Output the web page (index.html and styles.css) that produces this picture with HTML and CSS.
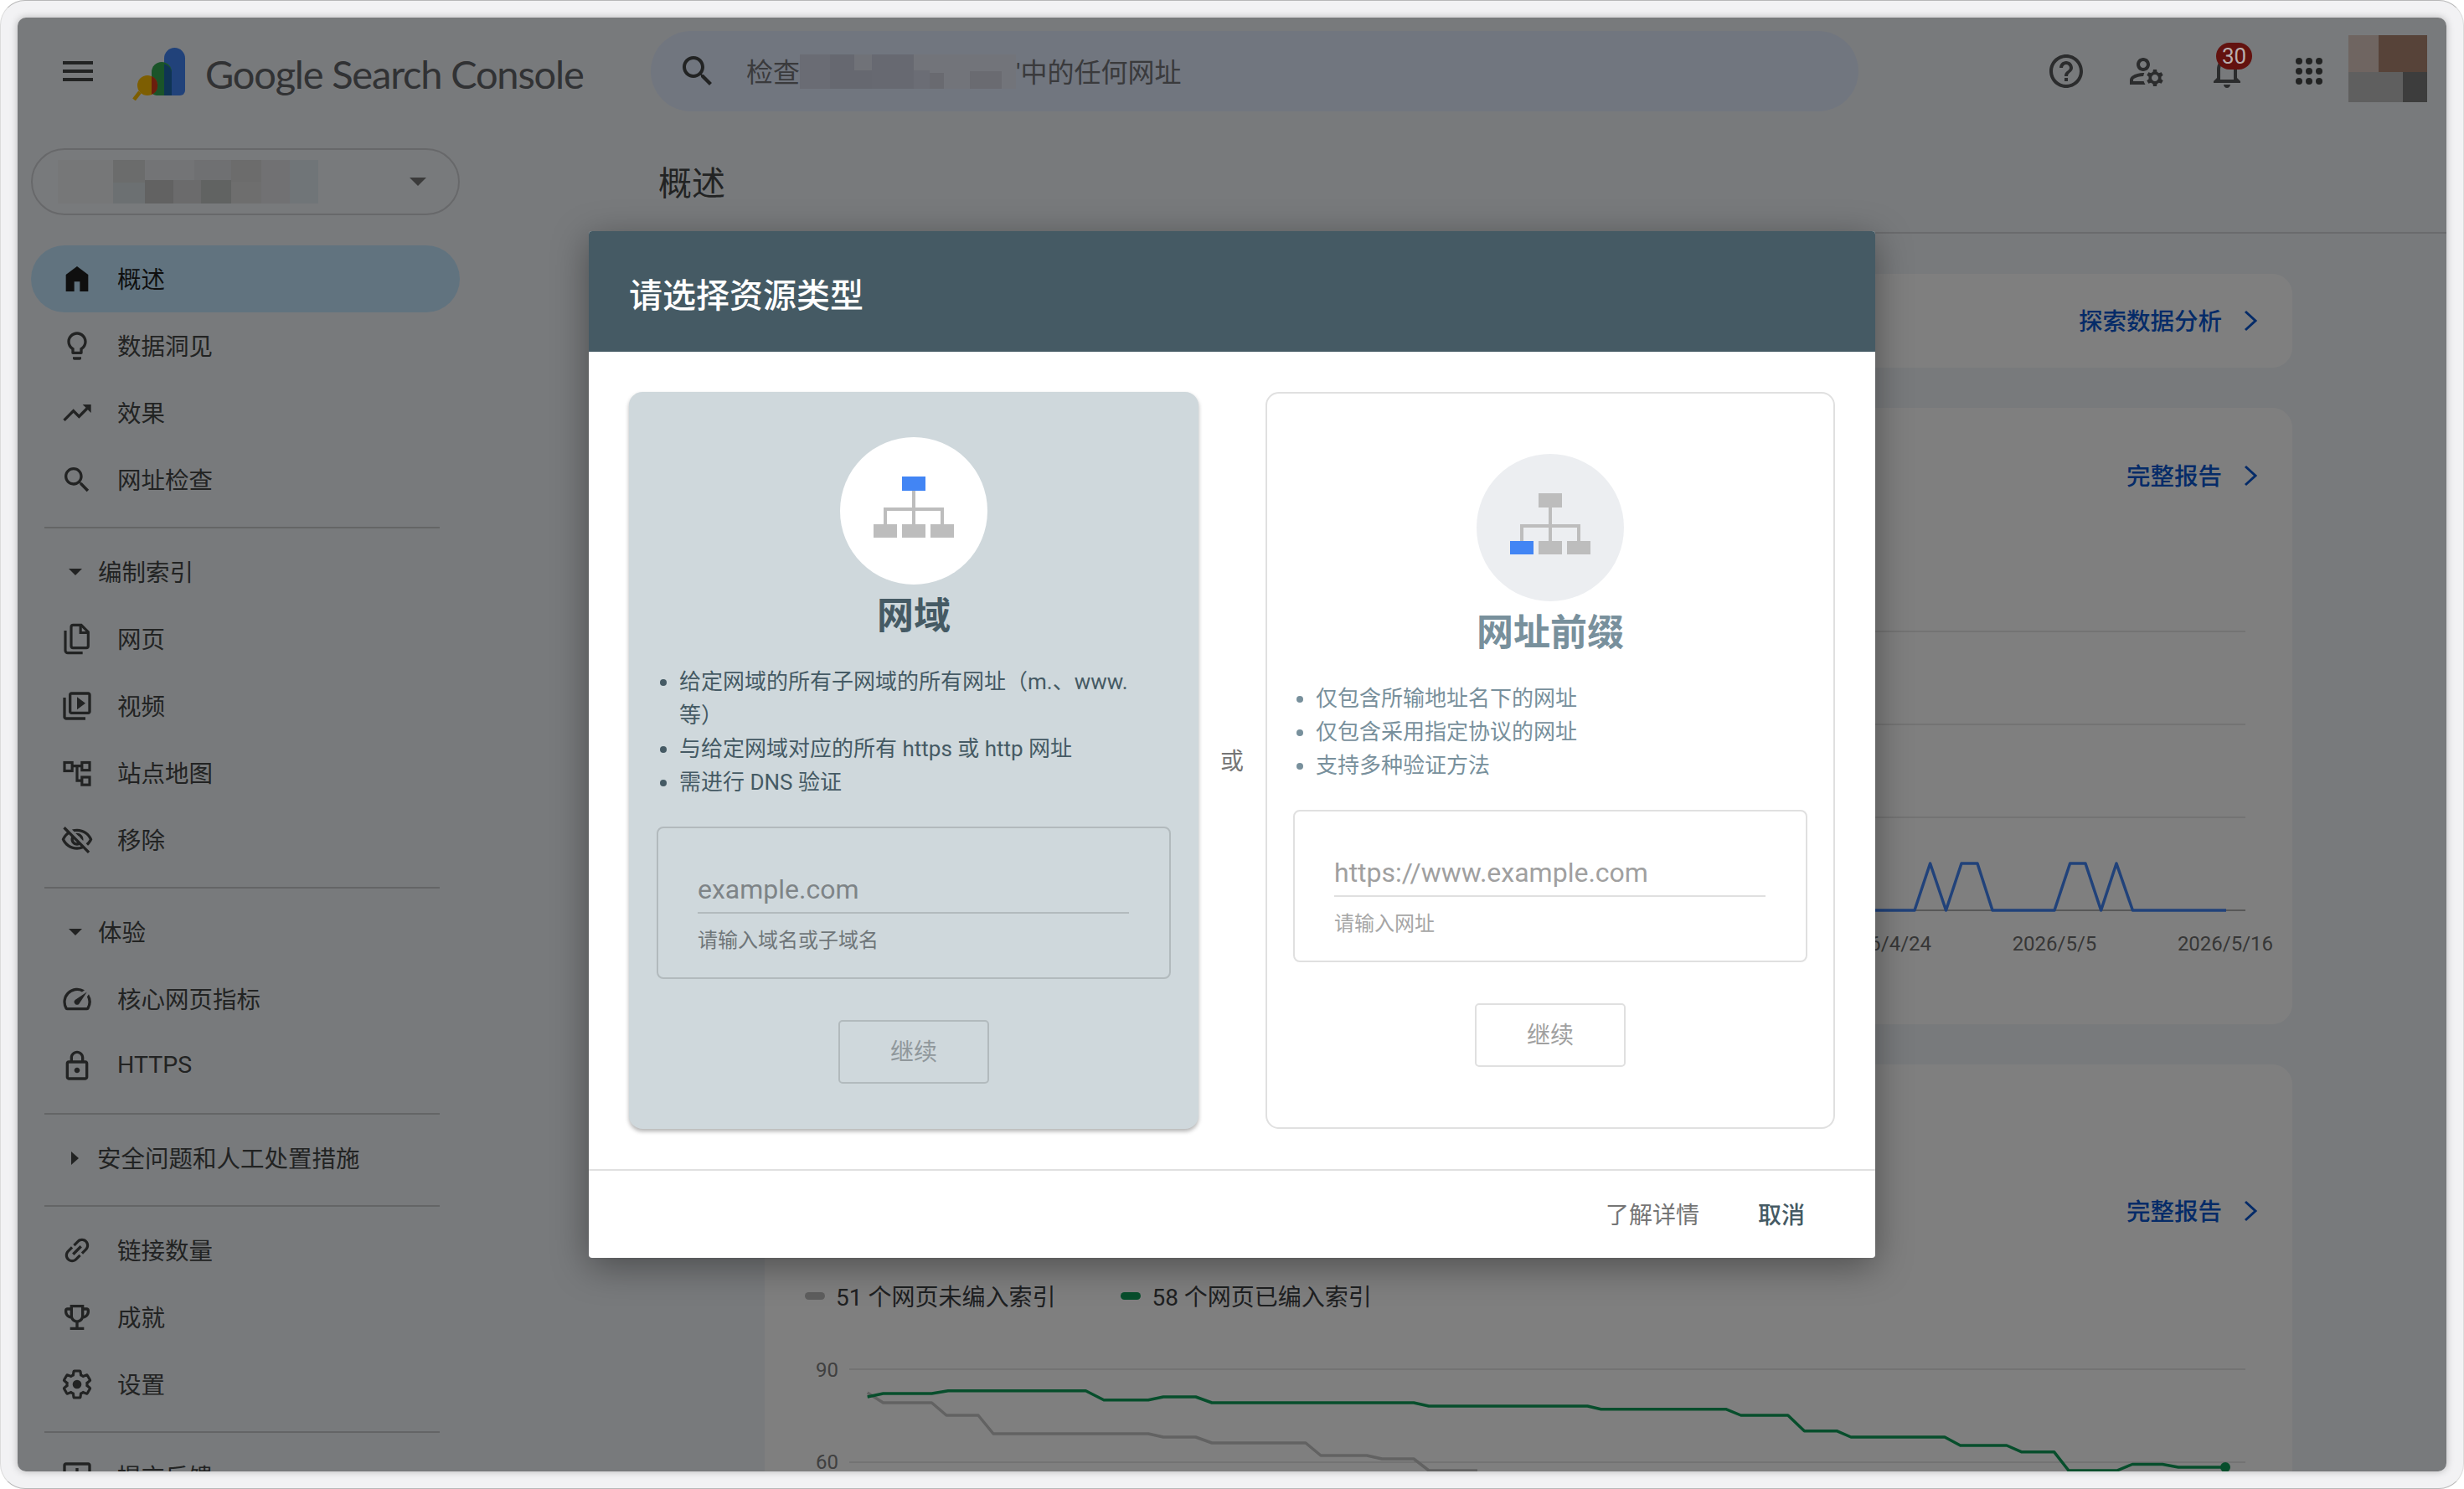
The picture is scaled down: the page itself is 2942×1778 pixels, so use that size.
FILE: index.html
```html
<!DOCTYPE html>
<html lang="zh-CN">

<head>
    <meta charset="utf-8">
    <title>Google Search Console</title>
    <link rel="stylesheet" href="styles.css">
</head>

<body>
    <div class="window">
        <div class="app">
            <header class="top_bar">
                <svg class="menu_icon" viewBox="0 0 24 24"><path d="M3 18h18v-2H3v2zm0-5h18v-2H3v2zm0-7v2h18V6H3z"/></svg>
                <svg class="logo" viewBox="0 0 64 64">
                    <path fill="#4285f4" d="M38 13.5a12.5 12.5 0 0 1 25 0V52a6 6 0 0 1-6 6H38z"/>
                    <path fill="#34a853" d="M23 30a12 12 0 0 1 24 0V58H29a6 6 0 0 1-6-6z"/>
                    <path fill="#1f68a8" d="M38 20.5a12 12 0 0 1 9 9.5V58H38z"/>
                    <line x1="9" y1="54" x2="2" y2="63" stroke="#fbbc04" stroke-width="4.5"/>
                    <circle cx="18" cy="46" r="12" fill="#fbbc04"/>
                    <path fill="#d63c1c" d="M23 35a12 12 0 0 1 0 22z"/>
                </svg>
                <div class="product_name">Google Search Console</div>
                <div class="search_bar">
                    <svg class="search_icon" viewBox="0 0 24 24"><path d="M15.5 14h-.79l-.28-.27C15.41 12.59 16 11.11 16 9.5 16 5.91 13.09 3 9.5 3S3 5.91 3 9.5 5.91 16 9.5 16c1.61 0 3.09-.59 4.23-1.57l.27.28v.79l5 4.99L20.49 19l-4.99-5zm-6 0C7.01 14 5 11.99 5 9.5S7.01 5 9.5 5 14 7.01 14 9.5 11.99 14 9.5 14z"/></svg>
                    <span class="search_text">检查</span>
                    <svg class="search_mosaic" viewBox="0 0 258 41">
                        <rect width="36" height="41" fill="#d4d8e8"/>
                        <rect x="36" width="50" height="41" fill="#ccd0e0"/>
                        <rect x="65" width="21" height="19" fill="#e0e4f0"/>
                        <rect x="86" width="50" height="41" fill="#ced2e2"/>
                        <rect x="136" width="122" height="41" fill="#e4e8f4"/>
                        <rect x="136" y="19" width="19" height="22" fill="#d6daea"/>
                        <rect x="155" y="22" width="17" height="19" fill="#d2d4e0"/>
                        <rect x="203" y="20" width="38" height="21" fill="#d4d6e2"/>
                    </svg>
                    <span class="search_text">'中的任何网址</span>
                </div>
                <div class="top_icons">
                    <svg class="top_icon" viewBox="0 0 24 24"><path d="M11 18h2v-2h-2v2zm1-16C6.48 2 2 6.48 2 12s4.48 10 10 10 10-4.48 10-10S17.52 2 12 2zm0 18c-4.41 0-8-3.59-8-8s3.59-8 8-8 8 3.59 8 8-3.59 8-8 8zm0-14c-2.21 0-4 1.79-4 4h2c0-1.1.9-2 2-2s2 .9 2 2c0 2-3 1.75-3 5h2c0-2.25 3-2.5 3-5 0-2.21-1.79-4-4-4z"/></svg>
                    <svg class="top_icon" viewBox="0 0 24 24"><path d="M4,18v-0.65c0-0.34,0.16-0.66,0.41-0.81C6.1,15.53,8.03,15,10,15c0.03,0,0.05,0,0.08,0.01c0.1-0.7,0.3-1.37,0.59-1.98C10.45,13.01,10.23,13,10,13c-2.42,0-4.68,0.67-6.61,1.82C2.51,15.34,2,16.32,2,17.35V20h9.26c-0.42-0.6-0.75-1.28-0.97-2H4z"/><path d="M10,12c2.21,0,4-1.79,4-4s-1.79-4-4-4C7.79,4,6,5.79,6,8S7.79,12,10,12z M10,6c1.1,0,2,0.9,2,2s-0.9,2-2,2c-1.1,0-2-0.9-2-2S8.9,6,10,6z"/><path d="M20.75,16c0-0.22-0.03-0.42-0.06-0.63l1.14-1.01l-1-1.73l-1.45,0.49c-0.32-0.27-0.68-0.48-1.08-0.63L18,11h-2l-0.3,1.49c-0.4,0.15-0.76,0.36-1.08,0.63l-1.45-0.49l-1,1.73l1.14,1.01c-0.03,0.21-0.06,0.41-0.06,0.63s0.03,0.42,0.06,0.63l-1.14,1.01l1,1.73l1.45-0.49c0.32,0.27,0.68,0.48,1.08,0.63L16,21h2l0.3-1.49c0.4-0.15,0.76-0.36,1.08-0.63l1.45,0.49l1-1.73l-1.14-1.01C20.72,16.42,20.75,16.22,20.75,16z M17,18c-1.1,0-2-0.9-2-2s0.9-2,2-2s2,0.9,2,2S18.1,18,17,18z"/></svg>
                    <div class="bell">
                        <svg class="top_icon" viewBox="0 0 24 24"><path d="M12 22c1.1 0 2-.9 2-2h-4c0 1.1.9 2 2 2zm6-6v-5c0-3.07-1.63-5.64-4.5-6.32V4c0-.83-.67-1.5-1.5-1.5s-1.5.67-1.5 1.5v.68C7.64 5.36 6 7.92 6 11v5l-2 2v1h16v-1l-2-2zm-2 1H8v-6c0-2.48 1.51-4.5 4-4.5s4 2.02 4 4.5v6z"/></svg>
                        <span class="badge">30</span>
                    </div>
                    <svg class="top_icon grid_icon" viewBox="0 0 48 48">
                        <circle cx="12" cy="12" r="4"/><circle cx="24" cy="12" r="4"/><circle cx="36" cy="12" r="4"/>
                        <circle cx="12" cy="24" r="4"/><circle cx="24" cy="24" r="4"/><circle cx="36" cy="24" r="4"/>
                        <circle cx="12" cy="36" r="4"/><circle cx="24" cy="36" r="4"/><circle cx="36" cy="36" r="4"/>
                    </svg>
                </div>
                <svg class="avatar" viewBox="0 0 94 80">
                    <rect width="36" height="44" fill="#dfcbc3"/>
                    <rect x="36" width="58" height="44" fill="#ae8672"/>
                    <rect y="44" width="65" height="36" fill="#bebebe"/>
                    <rect x="65" y="44" width="29" height="36" fill="#7a7a7a"/>
                </svg>
            </header>

            <div class="body_row">
                <nav class="sidebar">
                    <div class="property">
                        <svg class="property_mosaic" viewBox="0 0 311 52">
                            <rect width="66" height="52" fill="#eceef0"/>
                            <rect x="66" width="38" height="27" fill="#d6d8d8"/>
                            <rect x="66" y="27" width="38" height="25" fill="#d8e0e4"/>
                            <rect x="104" width="59" height="24" fill="#e6e8ec"/>
                            <rect x="104" y="24" width="34" height="28" fill="#c4c4c4"/>
                            <rect x="138" y="24" width="33" height="28" fill="#d6d6d8"/>
                            <rect x="163" width="44" height="24" fill="#dee0e4"/>
                            <rect x="171" y="24" width="36" height="28" fill="#c2c6c4"/>
                            <rect x="207" width="36" height="26" fill="#d8d8d8"/>
                            <rect x="207" y="26" width="36" height="26" fill="#dcdcdc"/>
                            <rect x="243" width="34" height="52" fill="#e2e2e6"/>
                            <rect x="277" width="34" height="52" fill="#e0eaf0"/>
                        </svg>
                        <span class="property_arrow"></span>
                    </div>

                    <a class="nav_item active"><svg class="nav_icon" viewBox="0 0 24 24"><path d="M4 21V9l8-6 8 6v12h-6v-7h-4v7z"/></svg>概述</a>
                    <a class="nav_item"><svg class="nav_icon" viewBox="0 0 24 24"><path d="M9 21c0 .55.45 1 1 1h4c.55 0 1-.45 1-1v-1H9v1zm3-19C8.14 2 5 5.14 5 9c0 2.38 1.19 4.47 3 5.74V17c0 .55.45 1 1 1h6c.55 0 1-.45 1-1v-2.26c1.81-1.27 3-3.36 3-5.74 0-3.86-3.14-7-7-7zm2.85 11.1l-.85.6V16h-4v-2.3l-.85-.6C7.8 12.16 7 10.63 7 9c0-2.76 2.24-5 5-5s5 2.24 5 5c0 1.63-.8 3.16-2.15 4.1z"/></svg>数据洞见</a>
                    <a class="nav_item"><svg class="nav_icon" viewBox="0 0 24 24"><path d="M16 6l2.29 2.29-4.88 4.88-4-4L2 16.59 3.41 18l6-6 4 4 6.3-6.29L22 12V6z"/></svg>效果</a>
                    <a class="nav_item"><svg class="nav_icon" viewBox="0 0 24 24"><path d="M15.5 14h-.79l-.28-.27C15.41 12.59 16 11.11 16 9.5 16 5.91 13.09 3 9.5 3S3 5.91 3 9.5 5.91 16 9.5 16c1.61 0 3.09-.59 4.23-1.57l.27.28v.79l5 4.99L20.49 19l-4.99-5zm-6 0C7.01 14 5 11.99 5 9.5S7.01 5 9.5 5 14 7.01 14 9.5 11.99 14 9.5 14z"/></svg>网址检查</a>

                    <hr class="nav_line">
                    <div class="nav_head"><span class="arrow_down"></span>编制索引</div>
                    <a class="nav_item"><svg class="nav_icon line_icon" viewBox="0 0 24 24"><path d="M9.2 2H15l5 5v10a1.4 1.4 0 0 1-1.4 1.4H9.2A1.4 1.4 0 0 1 7.800 17V3.400A1.400 1.400 0 0 1 9.200 2z"/><path d="M14.500 2v5.500H20M3.600 6v14.200a1.800 1.800 0 0 0 1.800 1.800H16"/></svg>网页</a>
                    <a class="nav_item"><svg class="nav_icon" viewBox="0 0 24 24"><path d="M4 6H2v14c0 1.100.9 2 2 2h14v-2H4V6zm16-4H8c-1.100 0-2 .9-2 2v12c0 1.100.9 2 2 2h12c1.100 0 2-.9 2-2V4c0-1.100-.9-2-2-2zm0 14H8V4h12v12zM12 5.500v9l6-4.500z"/></svg>视频</a>
                    <a class="nav_item"><svg class="nav_icon line_icon" viewBox="0 0 24 24"><rect x="3" y="4.500" width="5.500" height="6"/><rect x="15.500" y="4.500" width="5.500" height="5.500"/><rect x="15.500" y="15" width="5.500" height="5.500"/><path d="M8.500 7h7M12 7v10.500h3.500"/></svg>站点地图</a>
                    <a class="nav_item"><svg class="nav_icon" viewBox="0 0 24 24"><path d="M12 6c3.790 0 7.170 2.130 8.820 5.500-.59 1.220-1.420 2.270-2.410 3.120l1.410 1.410c1.390-1.230 2.490-2.770 3.180-4.530C21.270 7.110 17 4 12 4c-1.270 0-2.490.2-3.640.57l1.650 1.650C10.660 6.090 11.320 6 12 6zm-1.070 1.140L13 9.210c.57.25 1.030.71 1.280 1.280l2.070 2.070c.08-.34.14-.7.14-1.070C16.500 9.010 14.480 7 12 7c-.37 0-.72.05-1.070.14zM2.010 3.870l2.680 2.680C3.060 7.830 1.770 9.530 1 11.500 2.730 15.890 7 19 12 19c1.520 0 2.980-.29 4.320-.82l3.420 3.420 1.410-1.410L3.420 2.450 2.010 3.870zm7.500 7.500l2.610 2.610c-.04.01-.08.02-.12.02-1.380 0-2.500-1.120-2.500-2.500 0-.05.01-.08.01-.13zm-3.400-3.400l1.750 1.750c-.23.55-.36 1.150-.36 1.780 0 2.480 2.020 4.500 4.500 4.500.63 0 1.230-.13 1.770-.36l.98.98c-.88.24-1.800.38-2.750.38-3.790 0-7.170-2.130-8.820-5.500.7-1.430 1.720-2.610 2.930-3.530z"/></svg>移除</a>

                    <hr class="nav_line">
                    <div class="nav_head"><span class="arrow_down"></span>体验</div>
                    <a class="nav_item"><svg class="nav_icon" viewBox="0 0 24 24"><path d="M20.380 8.570l-1.230 1.850a8 8 0 0 1-.22 7.580H5.070A8 8 0 0 1 15.580 6.850l1.850-1.230A10 10 0 0 0 3.350 19a2 2 0 0 0 1.720 1h13.850a2 2 0 0 0 1.740-1 10 10 0 0 0-.27-10.440zm-9.790 6.840a2 2 0 0 0 2.830 0l5.660-8.490-8.490 5.660a2 2 0 0 0 0 2.830z"/></svg>核心网页指标</a>
                    <a class="nav_item"><svg class="nav_icon" viewBox="0 0 24 24"><path d="M18 8h-1V6c0-2.760-2.240-5-5-5S7 3.240 7 6v2H6c-1.100 0-2 .9-2 2v10c0 1.100.9 2 2 2h12c1.100 0 2-.9 2-2V10c0-1.100-.9-2-2-2zM9 6c0-1.660 1.340-3 3-3s3 1.340 3 3v2H9V6zm9 14H6V10h12v10zm-6-3c1.100 0 2-.9 2-2s-.9-2-2-2-2 .9-2 2 .9 2 2 2z"/></svg>HTTPS</a>

                    <hr class="nav_line">
                    <div class="nav_head"><span class="arrow_right"></span>安全问题和人工处置措施</div>

                    <hr class="nav_line">
                    <a class="nav_item"><svg class="nav_icon" viewBox="0 0 24 24"><path transform="rotate(-45 12 12)" d="M3.900 12c0-1.710 1.390-3.100 3.100-3.100h4V7H7c-2.760 0-5 2.240-5 5s2.240 5 5 5h4v-1.900H7c-1.710 0-3.100-1.390-3.100-3.100zM8 13h8v-2H8v2zm9-6h-4v1.900h4c1.710 0 3.100 1.390 3.100 3.100s-1.390 3.100-3.100 3.100h-4V17h4c2.760 0 5-2.240 5-5s-2.240-5-5-5z"/></svg>链接数量</a>
                    <a class="nav_item"><svg class="nav_icon" viewBox="0 0 24 24"><path d="M19 5h-2V3H7v2H5c-1.100 0-2 .9-2 2v1c0 2.550 1.920 4.630 4.390 4.940.63 1.500 1.980 2.630 3.610 2.960V19H7v2h10v-2h-4v-3.100c1.630-.33 2.980-1.460 3.610-2.960C19.080 12.630 21 10.550 21 8V7c0-1.100-.9-2-2-2zM5 8V7h2v3.820C5.840 10.400 5 9.300 5 8zm7 6c-1.650 0-3-1.350-3-3V5h6v6c0 1.650-1.350 3-3 3zm7-6c0 1.300-.84 2.400-2 2.820V7h2v1z"/></svg>成就</a>
                    <a class="nav_item"><svg class="nav_icon" viewBox="0 0 24 24"><path fill="none" stroke="#444746" stroke-width="1.900" d="M19.140 12.940c.04-.3.06-.61.06-.94 0-.32-.02-.64-.07-.94l2.030-1.580c.18-.14.23-.41.12-.61l-1.920-3.320c-.12-.22-.37-.29-.59-.22l-2.390.96c-.5-.38-1.030-.7-1.620-.94l-.36-2.540c-.04-.24-.24-.41-.48-.41h-3.840c-.24 0-.43.17-.47.41l-.36 2.540c-.59.24-1.130.57-1.620.94l-2.390-.96c-.22-.08-.47 0-.59.22L2.740 8.870c-.12.21-.08.47.12.61l2.030 1.580c-.05.3-.09.63-.09.94s.02.64.07.94l-2.030 1.580c-.18.14-.23.41-.12.61l1.920 3.320c.12.22.37.29.59.22l2.390-.96c.5.38 1.030.7 1.620.94l.36 2.540c.05.24.24.41.48.41h3.840c.24 0 .44-.17.47-.41l.36-2.540c.59-.24 1.130-.56 1.620-.94l2.390.96c.22.08.47 0 .59-.22l1.920-3.320c.12-.22.07-.47-.12-.61l-2.010-1.580z"/><circle cx="12" cy="12" r="3.200"/></svg>设置</a>

                    <hr class="nav_line">
                    <a class="nav_item"><svg class="nav_icon" viewBox="0 0 24 24"><path d="M20 2H4c-1.100 0-2 .9-2 2v18l4-4h14c1.100 0 2-.9 2-2V4c0-1.100-.9-2-2-2zm0 14H5.170L4 17.170V4h16v12zM11 12h2v2h-2zm0-6h2v4h-2z"/></svg>提交反馈</a>
                </nav>

                <main class="main">
                    <div class="page_title"><h1>概述</h1></div>
                    <div class="cards">
                        <section class="card card_short">
                            <a class="card_link">探索数据分析<svg class="chevron" viewBox="0 0 18 26"><path d="M2 2l12 11L2 24"/></svg></a>
                        </section>

                        <section class="card card_chart">
                            <div class="link_row">
                                <a class="card_link">完整报告<svg class="chevron" viewBox="0 0 18 26"><path d="M2 2l12 11L2 24"/></svg></a>
                            </div>
                            <svg class="chart" viewBox="0 0 1824 574">
                                <path class="grid_line" d="M101 105H1768M101 216H1768M101 327H1768"/>
                                <path class="axis_line" d="M101 438H1768"/>
                                <polyline class="blue_line" points="1200,438 1373,438 1391.600,382 1410.500,438 1429,382 1448,382 1466,438 1540,438 1558.600,382 1577,382 1595.600,438 1614,382 1633.400,438 1745,438"/>
                                <text class="axis_text" x="1336" y="486">2026/4/24</text>
                                <text class="axis_text" x="1540" y="486">2026/5/5</text>
                                <text class="axis_text" x="1744" y="486">2026/5/16</text>
                            </svg>
                        </section>

                        <section class="card card_index">
                            <div class="link_row link_row_index">
                                <a class="card_link">完整报告<svg class="chevron" viewBox="0 0 18 26"><path d="M2 2l12 11L2 24"/></svg></a>
                            </div>
                            <div class="legend">
                                <span class="legend_item"><i class="legend_dot dot_gray"></i>51 个网页未编入索引</span>
                                <span class="legend_item"><i class="legend_dot dot_green"></i>58 个网页已编入索引</span>
                            </div>
                            <svg class="chart" viewBox="0 0 1824 200">
                                <path class="grid_line" d="M101 68H1768M101 179H1768"/>
                                <text class="y_text" x="88" y="77">90</text>
                                <text class="y_text" x="88" y="187">60</text>
                                <polyline class="gray_line" points="122.700,96 141.500,108 199.500,108 217,123 255,123 273,145 458,145 476,149 514.700,149 534,156 646,156 664,171 719,171 737,175 775,175 793,189 851,189"/>
                                <polyline class="green_line" points="122.700,101 141.500,97 199.500,97 219,93.700 383.400,93.700 405,104.700 458,104.700 476,101 514.700,101 534,108 775,108 793,112 982.500,112 998.600,115.700 1147.700,115.700 1165.600,123 1221.800,123 1241.400,141.700 1280,141.700 1297,149 1409,149 1427.600,159 1483,159 1501,166.800 1539.700,166.800 1557,189 1614.500,189 1633,181.500 1669,181.500 1688,185 1744,185"/>
                                <circle class="green_end" cx="1744" cy="185" r="6"/>
                            </svg>
                        </section>
                    </div>
                </main>
            </div>

            <div class="scrim"></div>

            <div class="dialog">
                <div class="dialog_head">请选择资源类型</div>
                <div class="dialog_body">
                    <div class="type_card selected">
                        <div class="type_circle">
                            <svg class="tree" viewBox="0 0 96 73">
                                <path class="tree_line" d="M48 17V57M14 57V39H82V57"/>
                                <rect class="tree_blue" x="34" width="28" height="17"/>
                                <rect class="tree_gray" y="57" width="28" height="16"/>
                                <rect class="tree_gray" x="34" y="57" width="28" height="16"/>
                                <rect class="tree_gray" x="68" y="57" width="28" height="16"/>
                            </svg>
                        </div>
                        <h2 class="type_title">网域</h2>
                        <ul class="type_list">
                            <li>给定网域的所有子网域的所有网址（m.、www. 等）</li>
                            <li>与给定网域对应的所有 https 或 http 网址</li>
                            <li>需进行 DNS 验证</li>
                        </ul>
                        <div class="field_box">
                            <div class="field_input">example.com</div>
                            <div class="field_hint">请输入域名或子域名</div>
                        </div>
                        <button class="continue_btn">继续</button>
                    </div>

                    <div class="or_text">或</div>

                    <div class="type_card">
                        <div class="type_circle">
                            <svg class="tree" viewBox="0 0 96 73">
                                <path class="tree_line" d="M48 17V57M14 57V39H82V57"/>
                                <rect class="tree_gray" x="34" width="28" height="17"/>
                                <rect class="tree_blue" y="57" width="28" height="16"/>
                                <rect class="tree_gray" x="34" y="57" width="28" height="16"/>
                                <rect class="tree_gray" x="68" y="57" width="28" height="16"/>
                            </svg>
                        </div>
                        <h2 class="type_title">网址前缀</h2>
                        <ul class="type_list">
                            <li>仅包含所输地址名下的网址</li>
                            <li>仅包含采用指定协议的网址</li>
                            <li>支持多种验证方法</li>
                        </ul>
                        <div class="field_box">
                            <div class="field_input">https://www.example.com</div>
                            <div class="field_hint">请输入网址</div>
                        </div>
                        <button class="continue_btn">继续</button>
                    </div>
                </div>
                <div class="dialog_foot">
                    <button class="foot_btn">了解详情</button>
                    <button class="foot_btn foot_cancel">取消</button>
                </div>
            </div>
        </div>
    </div>
</body>

</html>
```

FILE: styles.css
```css
* {
    padding: 0;
    margin: 0;
    box-sizing: border-box;
}

html,
body {
    width: 100%;
    height: 100%;
    background: #fff;
    overflow: hidden;
    font-family: Roboto, "Noto Sans CJK SC", sans-serif;
    color: #444746;
}

.window {
    width: 2942px;
    height: 1778px;
    padding: 20px;
    background: #f2f2f4;
    border: 1px solid #dcdcdc;
    border-top-color: #b8b8b8;
    border-bottom-color: #b8b8b8;
    border-radius: 30px;
}

.app {
    position: relative;
    width: 2900px;
    height: 1736px;
    background: #f1f4f8;
    border-radius: 10px;
    overflow: hidden;
    box-shadow: 0 0 10px rgba(0, 0, 0, .25);
}

/* top bar */
.top_bar {
    display: flex;
    align-items: center;
    height: 128px;
    padding-left: 48px;
}

.menu_icon {
    width: 48px;
    height: 48px;
    fill: #444746;
}

.logo {
    width: 64px;
    height: 64px;
    margin: 6px 0 0 41px;
}

.product_name {
    margin: 5px 0 0 23px;
    font-family: Lato, sans-serif;
    font-size: 47px;
    letter-spacing: -1.2px;
    color: #626468;
    white-space: nowrap;
}

.search_bar {
    position: absolute;
    left: 756px;
    top: 16px;
    display: flex;
    align-items: center;
    width: 1442px;
    height: 96px;
    padding-left: 32px;
    border-radius: 48px;
    background: #e2ecff;
}

.search_icon {
    width: 48px;
    height: 48px;
    margin-right: 34px;
    fill: #444746;
}

.search_text {
    margin-top: -3px;
    font-size: 32px;
    color: #747579;
}

.search_mosaic {
    width: 258px;
    height: 41px;
}

.top_icons {
    display: flex;
    gap: 48px;
    margin-left: auto;
    margin-right: 23px;
}

.top_icon {
    display: block;
    width: 48px;
    height: 48px;
    fill: #56585a;
}

.grid_icon {
    margin-left: 2px;
    fill: #444746;
}

.bell {
    position: relative;
}

/* sits above the scrim so the digits stay light */
.badge {
    position: absolute;
    z-index: 3;
    left: 11px;
    top: -10px;
    width: 43px;
    height: 32px;
    border-radius: 16px;
    background: #63120f;
    color: #b8aeae;
    font-size: 26px;
    line-height: 32px;
    text-align: center;
}

.avatar {
    width: 94px;
    height: 80px;
    margin: 0 23px 6px 0;
}

/* sidebar */
.body_row {
    display: flex;
    height: 1608px;
}

.sidebar {
    flex: none;
    width: 590px;
    padding: 28px 0 0 16px;
}

.property {
    display: flex;
    align-items: center;
    justify-content: space-between;
    width: 512px;
    height: 80px;
    margin-bottom: 36px;
    padding: 0 38px 0 30px;
    border: 2px solid #cfd1d5;
    border-radius: 40px;
}

.property_mosaic {
    width: 311px;
    height: 52px;
}

.property_arrow {
    width: 0;
    height: 0;
    border-left: 10px solid transparent;
    border-right: 10px solid transparent;
    border-top: 10px solid #777;
}

.nav_item {
    display: flex;
    align-items: center;
    width: 512px;
    height: 80px;
    padding: 0 0 4px 35px;
    border-radius: 40px;
    font-size: 28.5px;
}

.nav_item.active {
    background: #c2e7ff;
    color: #1f1f1f;
}

.nav_item.active .nav_icon {
    fill: #1f1f1f;
}

.nav_icon {
    flex: none;
    width: 40px;
    height: 40px;
    margin: 4px 28px 0 0;
    fill: #444746;
}

.line_icon {
    fill: none;
    stroke: #444746;
    stroke-width: 1.900;
}

.nav_line {
    width: 472px;
    height: 2px;
    margin: 16px 0 12px 16px;
    border: none;
    background: #c8cacd;
}

.nav_head {
    display: flex;
    align-items: center;
    height: 80px;
    padding: 0 0 4px 45px;
    font-size: 28.5px;
}

.arrow_down {
    width: 0;
    height: 0;
    margin: 4px 19px 0 0;
    border-left: 8px solid transparent;
    border-right: 8px solid transparent;
    border-top: 8px solid #444746;
}

.arrow_right {
    width: 0;
    height: 0;
    margin: 4px 22px 0 3px;
    border-top: 8px solid transparent;
    border-bottom: 8px solid transparent;
    border-left: 9px solid #444746;
}

/* main column */
.main {
    flex: 1;
    min-width: 0;
    overflow: hidden;
}

.page_title {
    display: flex;
    align-items: center;
    height: 130px;
    margin-left: 175px;
    padding-top: 5px;
    border-bottom: 2px solid #d4d6da;
}

.page_title h1 {
    font-size: 40px;
    font-weight: 400;
    color: #444746;
}

.cards {
    display: flex;
    flex-direction: column;
    gap: 48px;
    width: 1824px;
    margin: 48px 0 0 302px;
}

.card {
    flex: none;
    background: #fff;
    border-radius: 24px;
    overflow: hidden;
}

.card_short {
    display: flex;
    align-items: center;
    justify-content: flex-end;
    height: 112px;
}

.card_chart {
    height: 736px;
}

.card_index {
    height: 600px;
}

.link_row {
    display: flex;
    align-items: center;
    justify-content: flex-end;
    height: 162px;
}

.link_row_index {
    height: 80px;
    margin-top: 135px;
}

.card_link {
    display: flex;
    align-items: center;
    padding: 0 40px 4px 0;
    font-size: 28.5px;
    font-weight: 500;
    color: #0b57d0;
}

.chevron {
    width: 18px;
    height: 26px;
    margin: 4px 0 0 26px;
    fill: none;
    stroke: #0b57d0;
    stroke-width: 3;
}

.chart {
    display: block;
    width: 1824px;
}

.grid_line {
    fill: none;
    stroke: #e6e6e6;
    stroke-width: 2;
}

.axis_line {
    fill: none;
    stroke: #b0b0b0;
    stroke-width: 2;
}

.blue_line,
.gray_line,
.green_line {
    fill: none;
    stroke-width: 3.500;
    stroke-linejoin: round;
}

.blue_line {
    stroke: #4285f4;
}

.gray_line {
    stroke: #c4c4c4;
}

.green_line {
    stroke: #0f9d58;
}

.green_end {
    fill: #0f9d58;
}

.axis_text {
    font-size: 24px;
    fill: #6e6e6e;
    text-anchor: middle;
}

.y_text {
    font-size: 24px;
    fill: #808080;
    text-anchor: end;
}

.legend {
    display: flex;
    align-items: center;
    gap: 78px;
    height: 40px;
    margin-top: 41px;
    padding-left: 48px;
    font-size: 28px;
    color: #3c4043;
}

.legend_item {
    display: flex;
    align-items: center;
}

.legend_dot {
    width: 24px;
    height: 9px;
    margin-right: 13px;
    border-radius: 5px;
}

.dot_gray {
    background: #bdbdbd;
}

.dot_green {
    background: #0f9d58;
}

/* dialog over the dimmed page */
.scrim {
    position: absolute;
    z-index: 2;
    inset: 0;
    background: rgba(0, 0, 0, .5);
}

.dialog {
    position: absolute;
    z-index: 4;
    left: 682px;
    top: 255px;
    display: flex;
    flex-direction: column;
    width: 1536px;
    height: 1226px;
    background: #fff;
    border-radius: 4px;
    box-shadow: 0 10px 44px rgba(0, 0, 0, .38);
    overflow: hidden;
}

.dialog_head {
    flex: none;
    display: flex;
    align-items: center;
    height: 144px;
    padding: 4px 0 0 48px;
    background: #455a64;
    color: #fff;
    font-size: 40px;
    font-weight: 500;
}

.dialog_body {
    flex: none;
    display: flex;
    align-items: stretch;
    height: 976px;
    padding: 48px;
}

.or_text {
    flex: none;
    align-self: center;
    width: 80px;
    padding-bottom: 3px;
    color: #757575;
    font-size: 28px;
    text-align: center;
}

.type_card {
    flex: none;
    display: flex;
    flex-direction: column;
    align-items: center;
    width: 680px;
    height: 880px;
    padding-top: 72px;
    border: 2px solid #e0e0e0;
    border-radius: 16px;
    color: #78909c;
}

.type_card.selected {
    padding-top: 52px;
    background: #cfd8dc;
    border-color: #cfd8dc;
    color: #455a64;
    box-shadow: 0 3px 5px rgba(0, 0, 0, .3);
}

.type_circle {
    display: flex;
    align-items: flex-start;
    justify-content: center;
    width: 176px;
    height: 176px;
    padding-top: 47px;
    border-radius: 50%;
    background: #eceef1;
}

.selected .type_circle {
    background: #fff;
}

.tree {
    width: 96px;
    height: 73px;
}

.tree_line {
    fill: none;
    stroke: #bdbdbd;
    stroke-width: 4;
}

.tree_blue {
    fill: #4285f4;
}

.tree_gray {
    fill: #bdbdbd;
}

.type_title {
    margin-top: 8px;
    font-size: 44px;
    font-weight: 700;
    line-height: 60px;
}

.type_list {
    align-self: stretch;
    margin-top: 28px;
    padding: 0 50px 0 58px;
    font-size: 26px;
    line-height: 40px;
}

.field_box {
    width: 614px;
    height: 182px;
    margin-top: 33px;
    padding: 49px 48px 0 47px;
    border: 2px solid #e0e0e0;
    border-radius: 8px;
}

.selected .field_box,
.selected .continue_btn,
.selected .field_input {
    border-color: #b2babd;
}

.field_input {
    height: 53px;
    border-bottom: 2px solid #e0e0e0;
    color: #a0a0a0;
    font-size: 32px;
    line-height: 48px;
}

.selected .field_input {
    color: #7e8487;
}

.field_hint {
    margin-top: 14px;
    color: #a6a6a6;
    font-size: 24px;
    line-height: 36px;
}

.selected .field_hint {
    color: #6f7679;
}

.continue_btn {
    width: 180px;
    height: 76px;
    margin-top: 49px;
    padding-bottom: 4px;
    border: 2px solid #e0e0e0;
    border-radius: 5px;
    background: none;
    color: #a0a0a0;
    font-family: inherit;
    font-size: 28px;
}

.selected .continue_btn {
    color: #8f979b;
}

.dialog_foot {
    flex: 1;
    display: flex;
    align-items: center;
    justify-content: flex-end;
    gap: 70px;
    padding: 0 84px 3px 0;
    border-top: 2px solid #e0e0e0;
}

.foot_btn {
    border: none;
    background: none;
    color: #757575;
    font-family: inherit;
    font-size: 28px;
}

.foot_cancel {
    color: #455a64;
    font-weight: 500;
}
```
